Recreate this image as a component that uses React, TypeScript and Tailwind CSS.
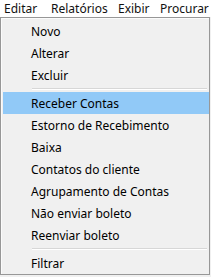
import React from 'react';

type Entry = { label: string; active?: boolean } | 'sep';

const entries: Entry[] = [
  { label: 'Novo' },
  { label: 'Alterar' },
  { label: 'Excluir' },
  'sep',
  { label: 'Receber Contas', active: true },
  { label: 'Estorno de Recebimento' },
  { label: 'Baixa' },
  { label: 'Contatos do cliente' },
  { label: 'Agrupamento de Contas' },
  { label: 'Não enviar boleto' },
  { label: 'Reenviar boleto' },
  'sep',
  { label: 'Filtrar' },
];

function Separator() {
  return (
    <div className="flex h-[6px] flex-col justify-center pl-[29px] pr-[2px]">
      <div className="h-px w-full bg-[#d7d7d7]" />
      <div className="h-px w-full bg-white" />
    </div>
  );
}

function Item({ label, active }: { label: string; active?: boolean }) {
  return (
    <div
      className={
        active
          ? 'flex h-[22px] items-center bg-[#91c9f7] pl-[28px] pt-[2px]'
          : 'flex h-[22px] items-center pl-[28px] pt-[2px]'
      }
    >
      {label}
    </div>
  );
}

export default function App() {
  return (
    <div
      className="h-[277px] w-[211px] overflow-hidden bg-[#f0f0f0] text-[12px] leading-none text-[#000]"
      style={{ fontFamily: '"Noto Sans", "Open Sans", sans-serif' }}
    >
      {/* menu bar */}
      <div className="flex h-[17px] items-center bg-white pl-[4px] pt-px text-[#111]">
        <span className="w-[47px]">Editar</span>
        <span className="w-[67px]">Relatórios</span>
        <span className="w-[42px]">Exibir</span>
        <span>Procurar</span>
      </div>

      {/* dropdown */}
      <div className="w-[210px] border border-[#979797] bg-[#f0f0f0]">
        <div className="border-l border-t border-[#fbfbfb] pl-px pt-[1px]">
          {entries.map((e, i) =>
            e === 'sep' ? (
              <Separator key={i} />
            ) : (
              <Item key={i} label={e.label} active={e.active} />
            ),
          )}
        </div>
      </div>
    </div>
  );
}
